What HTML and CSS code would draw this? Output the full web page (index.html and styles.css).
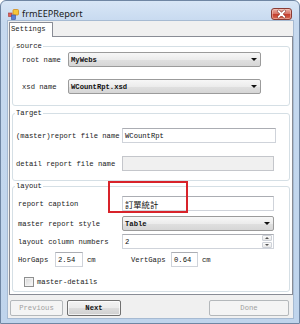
FILE: index.html
```html
<!DOCTYPE html>
<html>
<head>
<meta charset="utf-8">
<title>frmEEPReport</title>
<link rel="stylesheet" href="styles.css">
</head>
<body>
<div class="window">
  <div class="titlebar">
    <svg class="appicon" viewBox="0 0 11 11" width="11" height="11">
      <rect x="5" y="0.5" width="5.5" height="5.5" rx="1" fill="#f5c63a" stroke="#d08a1c" stroke-width="0.8"/>
      <rect x="0.5" y="4" width="3.5" height="3.5" fill="#e0605a" stroke="#a83a35" stroke-width="0.6"/>
      <rect x="3.5" y="6" width="4" height="4.5" fill="#5a7fd6" stroke="#34509a" stroke-width="0.6"/>
    </svg>
    <span class="title">frmEEPReport</span>
    <div class="close">
      <svg viewBox="0 0 21 12" width="21" height="12">
        <path d="M7.6 3.2 L13.4 8.8 M13.4 3.2 L7.6 8.8" stroke="#6b2a25" stroke-width="3.2" stroke-linecap="round" fill="none" opacity="0.55"/>
        <path d="M7.6 3.2 L13.4 8.8 M13.4 3.2 L7.6 8.8" stroke="#ffffff" stroke-width="1.8" stroke-linecap="round" fill="none"/>
      </svg>
    </div>
  </div>
  <div class="client">
    <div class="tabstrip">
      <div class="tab">Settings</div>
    </div>
    <div class="page">
      <fieldset class="group">
        <legend>source</legend>
        <div class="gbody source">
          <div class="row">
            <span class="lbl lbl-src">root name</span>
            <div class="combo w-src"><span>MyWebs</span><i class="arrow"></i></div>
          </div>
          <div class="row">
            <span class="lbl lbl-src">xsd name</span>
            <div class="combo w-src"><span>WCountRpt.xsd</span><i class="arrow"></i></div>
          </div>
        </div>
      </fieldset>
      <fieldset class="group target">
        <legend>Target</legend>
        <div class="gbody tgt">
          <div class="row">
            <span class="lbl lbl-tgt">(master)report file name</span>
            <div class="tb w-154"><span>WCountRpt</span></div>
          </div>
          <div class="row">
            <span class="lbl lbl-tgt">detail report file name</span>
            <div class="tb w-152 disabled"></div>
          </div>
        </div>
      </fieldset>
      <fieldset class="group layout">
        <legend>layout</legend>
        <div class="gbody lay">
          <div class="row">
            <span class="lbl lbl-lay">report caption</span>
            <div class="tb w-152"><span class="cjk">訂單統計</span></div>
          </div>
          <div class="row mt5">
            <span class="lbl lbl-lay">master report style</span>
            <div class="combo w-152"><span>Table</span><i class="arrow"></i></div>
          </div>
          <div class="row mt3">
            <span class="lbl lbl-lay">layout column numbers</span>
            <div class="tb w-152"><span>2</span>
              <div class="spin"><span><i class="up"></i></span><span><i class="down"></i></span></div>
            </div>
          </div>
          <div class="row mt3">
            <span class="lbl gl1">HorGaps</span>
            <div class="tb gbox1"><span>2.54</span></div>
            <span class="unit u1">cm</span>
            <span class="lbl gl2">VertGaps</span>
            <div class="tb gbox2"><span>0.64</span></div>
            <span class="unit">cm</span>
          </div>
          <div class="row cbrow">
            <span class="cb"></span>
            <span class="cblbl">master-details</span>
          </div>
        </div>
      </fieldset>
    </div>
    <div class="buttons">
      <div class="btn prev disabled">Previous</div>
      <div class="btn next">Next</div>
      <div class="btn done disabled">Done</div>
    </div>
  </div>
  <div class="annot"></div>
</div>
</body>
</html>
```

FILE: styles.css
```css
* { box-sizing: border-box; }
html, body { margin: 0; padding: 0; background: #ffffff; }
body {
  width: 300px;
  height: 324px;
  overflow: hidden;
  font-family: "Liberation Mono", "DejaVu Sans Mono", monospace;
  font-size: 7.2px;
  color: #1a1a1a;
}

.window {
  position: relative;
  width: 300px;
  height: 324px;
  border: 1px solid #6f86a3;
  border-radius: 6px 6px 0 0;
  background: linear-gradient(#d8e6f6 0, #c6d9ef 22px, #bfd4ec 100%);
  display: flex;
  flex-direction: column;
}

.titlebar {
  height: 20px;
  display: flex;
  align-items: center;
  padding: 6px 0 0 7px;
}
.appicon { flex: none; display: block; }
.title {
  margin-left: 3px;
  font-family: "Noto Sans", "Open Sans", sans-serif;
  font-size: 9.2px;
  line-height: 12px;
  color: #1b1b1b;
}
.close {
  margin-left: auto;
  margin-right: 7px;
  width: 21px;
  height: 12px;
  border: 1px solid #8a3b33;
  border-radius: 3px;
  background: linear-gradient(#eab0a5 0%, #d9786a 45%, #c4402f 55%, #d86a52 100%);
  box-shadow: inset 0 0 0 1px rgba(255, 220, 210, 0.45);
  overflow: hidden;
}
.close svg { display: block; margin: -1px 0 0 -1px; }

.client {
  margin: 0 6px 0 7px;
  width: 285px;
  height: 297px;
  background: #f0f0f0;
  box-shadow: 0 0 0 1px #a6bad2;
  display: flex;
  flex-direction: column;
}

.tabstrip {
  height: 15px;
  display: flex;
  align-items: flex-end;
  padding-left: 1px;
}
.tab {
  position: relative;
  z-index: 1;
  width: 44px;
  height: 15px;
  margin-bottom: -1px;
  border: 1px solid #898c95;
  border-bottom: none;
  border-radius: 1px 1px 0 0;
  background: #ffffff;
  padding-left: 1px;
  line-height: 13px;
}

.page {
  margin-left: 1px;
  width: 284px;
  height: 259px;
  border: 1px solid #898c95;
  background: #ffffff;
  padding: 5px 2px 0 2px;
  display: flex;
  flex-direction: column;
}

.group {
  margin: 0;
  padding: 0;
  min-width: 0;
  border: 1px solid #d5dfe5;
  border-radius: 3px;
}
.group legend {
  margin-left: 2px;
  padding: 0 1px;
  line-height: 8px;
  font-size: 7.2px;
}
.target { margin-top: 3px; }
.layout { margin-top: 1px; }

.gbody { display: flex; flex-direction: column; }
.source { padding: 2px 0 11px 9px; gap: 12px; }
.tgt { padding: 11px 0 9px 3px; gap: 13px; }
.lay { padding: 6px 0 4px 5px; }

.row {
  display: flex;
  align-items: center;
  height: 15px;
}
.mt5 { margin-top: 5px; }
.mt3 { margin-top: 3px; }
.cbrow { margin-top: 10px; height: 10px; padding-left: 6px; }

.lbl { flex: none; line-height: 10px; white-space: nowrap; }
.lbl-src { width: 46px; }
.lbl-tgt { width: 106px; }
.lbl-lay { width: 104px; }
.gl1 { width: 37px; }
.gl2 { width: 40px; }

.combo {
  height: 15px;
  border: 1px solid #9b9b9b;
  border-radius: 2px;
  background: linear-gradient(#f7f7f7 0%, #ececec 50%, #e0e0e0 51%, #d6d6d6 100%);
  display: flex;
  align-items: center;
  padding-left: 2px;
  font-weight: bold;
  color: #111;
}
.w-src { width: 193px; }
.w-154 { width: 154px; }
.w-152 { width: 152px; }
.arrow {
  margin-left: auto;
  margin-right: 3px;
  width: 0;
  height: 0;
  border-left: 3px solid transparent;
  border-right: 3px solid transparent;
  border-top: 3px solid #111;
}

.tb {
  height: 15px;
  border: 1px solid #cfd3da;
  border-top-color: #abadb3;
  background: #ffffff;
  padding-left: 2px;
  display: flex;
  align-items: center;
  color: #111;
}
.tb.disabled { background: #f0f0f0; border-color: #c4c6cb; }
.cjk {
  font-family: "Noto Sans CJK TC", "Noto Sans CJK SC", sans-serif;
  font-size: 8.3px;
  line-height: 10px;
  color: #111;
}
.gbox1 { width: 28px; }
.gbox2 { width: 27px; }
.unit { margin-left: 4px; line-height: 10px; }
.u1 { width: 44px; flex: none; }

.spin {
  margin-left: auto;
  margin-right: 1px;
  width: 10px;
  height: 13px;
  display: flex;
  flex-direction: column;
  gap: 1px;
}
.spin span {
  flex: 1;
  border: 1px solid #cdd1d8;
  border-radius: 1px;
  background: linear-gradient(#fbfbfb, #e8e8e8);
  display: flex;
  align-items: center;
  justify-content: center;
}
.spin i { width: 0; height: 0; border-left: 2px solid transparent; border-right: 2px solid transparent; }
.spin .up { border-bottom: 2px solid #555; }
.spin .down { border-top: 2px solid #555; }

.cb {
  width: 10px;
  height: 10px;
  flex: none;
  border: 1px solid #8e8f8f;
  background: linear-gradient(135deg, #d6d6d6, #fafafa);
  box-shadow: inset 0 0 0 1px #f2f2f2;
}
.cblbl { margin-left: 3px; line-height: 10px; }

.buttons {
  display: flex;
  margin-top: 5px;
  padding: 0 4px 0 2px;
}
.btn {
  height: 16px;
  border: 1px solid #707070;
  border-radius: 2px;
  background: linear-gradient(#f3f3f3 0%, #ebebeb 50%, #dddddd 51%, #cfcfcf 100%);
  box-shadow: inset 0 0 0 1px rgba(255, 255, 255, 0.7);
  display: flex;
  align-items: center;
  justify-content: center;
  color: #111;
}
.btn.disabled {
  border-color: #b4b8bb;
  background: #f4f4f4;
  box-shadow: none;
  color: #a0a0a0;
}
.prev { width: 53px; }
.next { width: 54px; margin-left: 4px; font-weight: bold; }
.done { width: 80px; margin-left: auto; }

.annot {
  position: absolute;
  left: 107px;
  top: 180px;
  width: 80px;
  height: 32px;
  border: 2px solid #d8232a;
  pointer-events: none;
}
```
